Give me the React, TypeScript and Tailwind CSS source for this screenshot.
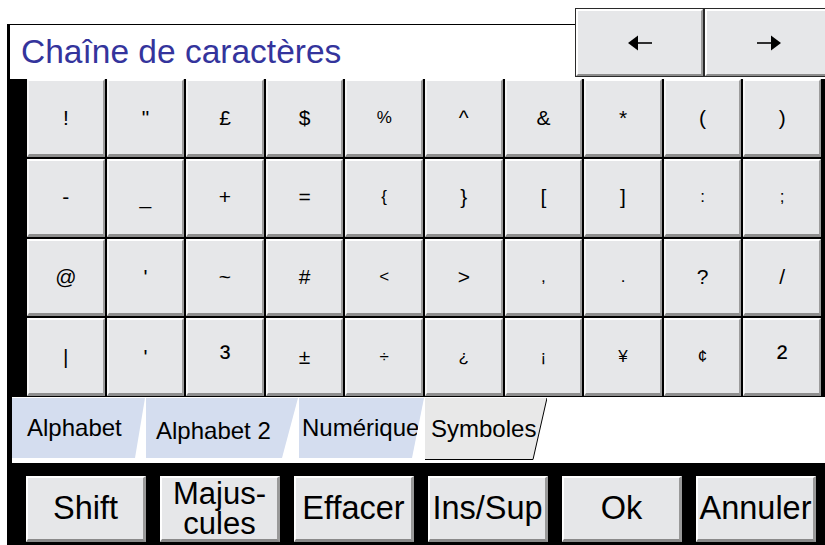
import React from 'react';

type Key = { label: string; size?: 'sm' | 'sup' };

const rows: Key[][] = [
  [{ label: '!' }, { label: '"' }, { label: '£' }, { label: '$' }, { label: '%', size: 'sm' }, { label: '^' }, { label: '&' }, { label: '*' }, { label: '(' }, { label: ')' }],
  [{ label: '-' }, { label: '_' }, { label: '+' }, { label: '=' }, { label: '{', size: 'sm' }, { label: '}' }, { label: '[' }, { label: ']' }, { label: ':', size: 'sm' }, { label: ';', size: 'sm' }],
  [{ label: '@' }, { label: "'" }, { label: '~' }, { label: '#' }, { label: '<', size: 'sm' }, { label: '>' }, { label: ',', size: 'sm' }, { label: '.', size: 'sm' }, { label: '?' }, { label: '/' }],
  [{ label: '|' }, { label: "'" }, { label: '³', size: 'sup' }, { label: '±' }, { label: '÷', size: 'sm' }, { label: '¿', size: 'sm' }, { label: '¡', size: 'sm' }, { label: '¥', size: 'sm' }, { label: '¢', size: 'sm' }, { label: '²', size: 'sup' }],
];

const sizeClass = {
  sm: 'text-[17px]',
  sup: 'text-[32px]',
  base: 'text-[21px]',
};

function ArrowIcon({ dir }: { dir: 'left' | 'right' }) {
  return (
    <svg width="24" height="16" viewBox="0 0 24 16">
      {dir === 'left' ? (
        <>
          <polygon points="0,8 10,0.5 10,15.5" fill="#000" />
          <line x1="9" y1="8" x2="24" y2="8" stroke="#000" strokeWidth="1.6" />
        </>
      ) : (
        <>
          <polygon points="24,8 14,0.5 14,15.5" fill="#000" />
          <line x1="0" y1="8" x2="15" y2="8" stroke="#000" strokeWidth="1.6" />
        </>
      )}
    </svg>
  );
}

function ArrowButton({ dir }: { dir: 'left' | 'right' }) {
  return (
    <div className="w-[129px] h-[69px] shrink-0 border border-[#2a2a2a] bg-[#e6e7e9]">
      <div className="h-full flex items-center justify-center border-t-2 border-l-2 border-t-white border-l-white border-b-2 border-r-2 border-b-[#8c8c8c] border-r-[#9a9a9a]">
        <ArrowIcon dir={dir} />
      </div>
    </div>
  );
}

const tabs = [
  { name: 'Alphabet', w: 'w-[133px]', pl: 'pl-[15px]', clip: '[clip-path:polygon(0_0,100%_0,calc(100%_-_10px)_100%,0_100%)]', pt: 'pt-0' },
  { name: 'Alphabet 2', w: 'w-[152px]', pl: 'pl-[10px]', clip: '[clip-path:polygon(0_0,100%_0,calc(100%_-_16px)_100%,0_100%)]', pt: 'pt-[6px]' },
  { name: 'Numérique', w: 'w-[125px]', pl: 'pl-[3px]', clip: '[clip-path:polygon(0_0,100%_0,calc(100%_-_12px)_100%,0_100%)]', pt: 'pt-0' },
];

const actions = ['Shift', 'Majus-\ncules', 'Effacer', 'Ins/Sup', 'Ok', 'Annuler'];

export default function App() {
  return (
    <div className="w-[825px] h-[545px] overflow-hidden bg-white flex flex-col font-['Liberation_Sans',Arial,sans-serif] text-black">
      {/* title + cursor arrows */}
      <div className="flex h-[79px] shrink-0">
        <div className="w-[7px] shrink-0" />
        <div className="w-[568px] shrink-0 mt-[24px] border-l-[3px] border-t border-black bg-white flex items-center pl-[11px]">
          <span className="text-[33.5px] text-[#34349c] leading-none">Chaîne de caractères</span>
        </div>
        <div className="flex mt-[8px] shrink-0">
          <ArrowButton dir="left" />
          <ArrowButton dir="right" />
        </div>
      </div>

      {/* keys */}
      <div className="ml-[7px] bg-black pl-[20px] pr-[4px] pb-[1px] h-[318px] shrink-0">
        <div className="grid grid-cols-10 grid-rows-4 gap-[2px] h-full">
          {rows.flat().map((k, i) => (
            <div
              key={i}
              className={`flex items-center justify-center bg-[#e6e7e9] border-t-2 border-l-2 border-t-white border-l-[#f6f6f6] border-b-[3px] border-r-2 border-b-[#8e8e8e] border-r-[#9c9c9c] ${sizeClass[k.size ?? 'base']}`}
            >
              {k.label}
            </div>
          ))}
        </div>
      </div>

      {/* keyboard pages */}
      <div className="ml-[7px] h-[66px] shrink-0 border-l-[5px] border-black bg-white flex pt-[1px] gap-[1px]">
        {tabs.map((t) => (
          <div key={t.name} className={`${t.w} ${t.pl} ${t.clip} ${t.pt} h-[60px] bg-[#d4ddef] flex items-center text-[24px]`}>
            {t.name}
          </div>
        ))}
        <div className="relative w-[122px] h-[62px] flex items-center pl-[6px] text-[24px]">
          <svg className="absolute inset-0" width="122" height="62" viewBox="0 0 122 62">
            <polygon points="0,0 122,0 108,61.5 0,61.5" fill="#e8e8e8" />
            <polyline points="0,61.5 108,61.5 122,0" fill="none" stroke="#000" strokeWidth="1" />
          </svg>
          <span className="relative">Symboles</span>
        </div>
      </div>

      {/* actions */}
      <div className="ml-[7px] flex-1 bg-black flex gap-[14px] pl-[19px] pt-[13px]">
        {actions.map((a) => (
          <div
            key={a}
            className={`w-[120px] h-[66px] shrink-0 bg-[#e6e7e9] border-t-2 border-l-2 border-t-white border-l-white border-b-[3px] border-r-[3px] border-b-[#8a8a8a] border-r-[#999] flex items-center justify-center text-center whitespace-pre-line ${a.includes('\n') ? 'text-[31px] leading-[30px]' : 'text-[32.5px]'}`}
          >
            {a}
          </div>
        ))}
      </div>
    </div>
  );
}
